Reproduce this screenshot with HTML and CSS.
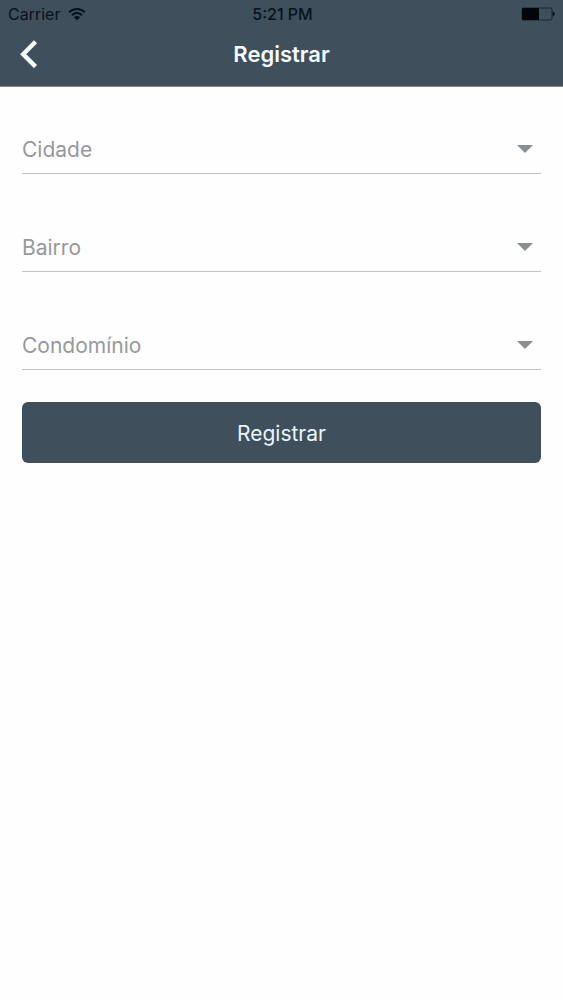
FILE: index.html
```html
<!DOCTYPE html>
<html lang="pt-BR">
<head>
<meta charset="utf-8">
<meta name="viewport" content="width=device-width, initial-scale=1">
<title>Registrar</title>
<link rel="stylesheet" href="styles.css">
</head>
<body>
<header class="header">
  <div class="status">
    <div class="carrier">
      <span>Carrier</span>
      <svg class="wifi" viewBox="0 0 18 14" aria-hidden="true">
        <path d="M1.2 5.2a11 11 0 0 1 15.6 0M4 8.2a7 7 0 0 1 10 0" fill="none" stroke="currentColor" stroke-width="2"/>
        <path d="M5.9 10.2a4.4 4.4 0 0 1 6.2 0L9 13.4z" fill="currentColor"/>
      </svg>
    </div>
    <span class="time">5:21 PM</span>
    <svg class="battery" viewBox="0 0 34 14" aria-hidden="true">
      <rect x="1" y="1" width="30" height="12" rx="1.5" fill="none" stroke="currentColor" stroke-opacity=".65"/>
      <rect x="1" y="1" width="17" height="12" rx="1" fill="#00060c"/>
      <path d="M31.500 4.5q2.2.6 2.2 2.500t-2.200 2.500z" fill="currentColor"/>
    </svg>
  </div>
  <div class="navbar">
    <button class="back" type="button" aria-label="Voltar">
      <svg class="chevron" viewBox="0 0 18 28" aria-hidden="true">
        <path d="M15.500 1.800L3.200 14.200L15.500 26.600" fill="none" stroke="currentColor" stroke-width="4.400"/>
      </svg>
    </button>
    <h1 class="title">Registrar</h1>
  </div>
</header>
<main>
  <form class="form">
    <div class="field">
      <select class="select" aria-label="Cidade"><option>Cidade</option></select>
      <svg class="arrow" viewBox="0 0 16 8" aria-hidden="true"><path d="M0 0h16L8 8z" fill="currentColor"/></svg>
    </div>
    <div class="field">
      <select class="select" aria-label="Bairro"><option>Bairro</option></select>
      <svg class="arrow" viewBox="0 0 16 8" aria-hidden="true"><path d="M0 0h16L8 8z" fill="currentColor"/></svg>
    </div>
    <div class="field">
      <select class="select" aria-label="Condomínio"><option>Condomínio</option></select>
      <svg class="arrow" viewBox="0 0 16 8" aria-hidden="true"><path d="M0 0h16L8 8z" fill="currentColor"/></svg>
    </div>
    <button class="submit" type="button">Registrar</button>
  </form>
</main>
</body>
</html>
```
FILE: styles.css
```css
* {
  box-sizing: border-box;
}

body {
  margin: 0;
  background: #fefefe;
  font-family: Inter, Roboto, sans-serif;
}

.header {
  border-bottom: 1px solid #7f8b93;
  background: #3f4f5c;
  color: #f4fbff;
}

.status {
  display: grid;
  grid-template-columns: 1fr auto 1fr;
  align-items: center;
  height: 28px;
  padding: 0 8px;
  color: #06121c;
  font-size: 16px;
  line-height: 28px;
}

.carrier {
  display: flex;
  align-items: center;
  gap: 8px;
}

.wifi {
  width: 18px;
  height: 14px;
}

.time {
  padding-left: 2px;
  font-weight: 500;
}

.battery {
  justify-self: end;
  width: 34px;
  height: 14px;
}

.navbar {
  display: grid;
  grid-template-columns: 58px 1fr 58px;
  align-items: center;
  height: 58px;
  padding-bottom: 6px;
}

.back {
  display: flex;
  padding: 0 20px;
  border: 0;
  background: none;
  color: inherit;
}

.chevron {
  width: 18px;
  height: 28px;
}

.title {
  margin: 0;
  font-size: 22px;
  font-weight: 600;
  line-height: 28px;
  text-align: center;
}

.form {
  display: flex;
  flex-direction: column;
  padding: 37px 22px;
}

.field {
  display: grid;
  align-items: center;
  height: 50px;
  margin-bottom: 48px;
  border-bottom: 1px solid #c0c3c4;
  color: #96999c;
}

.field:nth-of-type(3) {
  margin-bottom: 32px;
}

.select,
.arrow {
  grid-area: 1 / 1;
}

.select {
  width: 100%;
  height: 49px;
  padding: 2px 0 0;
  border: 0;
  appearance: none;
  background: none;
  color: inherit;
  font: inherit;
  font-size: 21px;
}

.arrow {
  justify-self: end;
  width: 16px;
  height: 8px;
  margin-right: 8px;
  color: #8b8e90;
  pointer-events: none;
}

.submit {
  height: 61px;
  padding-top: 2px;
  border: 0;
  border-radius: 6px;
  background: #3f4f5c;
  color: #eaf4fb;
  font: inherit;
  font-size: 21px;
}
```
